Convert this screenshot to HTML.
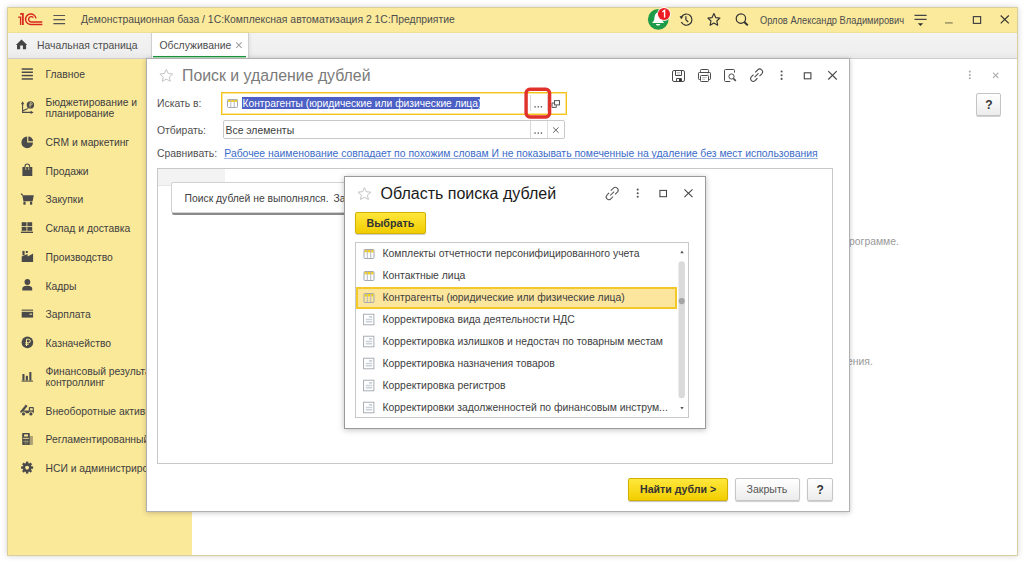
<!DOCTYPE html>
<html><head><meta charset="utf-8">
<style>
*{box-sizing:border-box;margin:0;padding:0}
html,body{width:1024px;height:563px;overflow:hidden;background:#fff;font-family:"Liberation Sans",sans-serif;font-size:10.4px;color:#4a4a4a}
.a{position:absolute}
.t{position:absolute;white-space:nowrap;line-height:12px}
#win{position:absolute;left:7px;top:7px;width:1011px;height:549px;border:1px solid #d8cf9c;box-shadow:0 0 6px rgba(0,0,0,.18);background:#fff;overflow:hidden}
svg{position:absolute;overflow:visible}
</style></head><body>
<div id="win"></div>

<!-- HEADER -->
<div class="a" style="left:8px;top:8px;width:1009px;height:25px;background:#fbea9c;border-bottom:1px solid #efdf95"></div>
<div class="t" style="left:81px;top:13.7px;color:#4d4d4d">Демонстрационная база / 1С:Комплексная автоматизация 2 1С:Предприятие</div>
<div class="t" style="left:759.5px;top:14.5px;color:#4d4d4d;transform:scaleX(.897);transform-origin:0 0">Орлов Александр Владимирович</div>

<!-- HEADER ICONS -->
<svg class="a" style="left:0;top:0" width="1024" height="40">
 <g fill="none" stroke="#d8261c" stroke-width="1.4">
  <path d="M18.2 17.1H20.6V25"/>
  <path d="M20.2 13.9H22.9V25" stroke-width="1.7"/>
  <path d="M36 18.4A5.25 5.25 0 1 0 31.2 24.5H42.3"/>
  <path d="M33.4 17.6A2.7 2.7 0 1 0 31.2 22H42.3"/>
 </g>
 <g stroke="#555" stroke-width="1.2">
  <path d="M53.4 15.5H65.1M53.4 19.6H65.1M53.4 23.6H65.1"/>
 </g>
 <circle cx="658.25" cy="19.4" r="10.35" fill="#1e9b48"/>
 <path d="M658 12.5C655 13 654.6 16 654.4 18.5C654.2 20.5 653.5 21.6 651.9 22.9H664.3C662.8 21.6 662 20.5 661.8 18.5C661.6 16 661 13 658 12.5Z" fill="#fff"/>
 <path d="M655.8 24H660.4C660 25.2 659.2 25.6 658.1 25.6C657 25.6 656.2 25.2 655.8 24Z" fill="#fff"/>
 <circle cx="664" cy="14" r="6.9" fill="#fff" opacity=".9"/>
 <circle cx="664" cy="14" r="6.1" fill="#ee1c24"/>
 <path d="M662.4 11.8L664.6 10.4V17.6" fill="none" stroke="#fff" stroke-width="1.4"/>
 <g fill="none" stroke="#333" stroke-width="1.2">
  <path d="M681.6 16.6A5.6 5.6 0 1 1 681.3 22.1"/>
  <path d="M685.9 16.2V19.8L688.2 22"/>
  <path d="M707.9 18.1L712.1 17.6L713.9 13.6L715.7 17.6L719.9 18.1L716.8 21L717.7 25.2L713.9 23.1L710.1 25.2L711 21Z" stroke-linejoin="round" stroke-width="1.15"/>
  <circle cx="740.9" cy="18.6" r="4.7"/>
  <path d="M744.3 22L747.8 25.4" stroke-width="2"/>
  <path d="M914.5 15.3H926.6M914.5 19.3H926.6" stroke="#444"/>
  <path d="M945 22.9H952.7" stroke="#8a8560" stroke-width="1.3"/>
  <rect x="973.4" y="16.6" width="7.2" height="6.8" stroke="#444"/>
  <path d="M1000.7 15.5L1008.8 23.4M1008.8 15.5L1000.7 23.4" stroke="#333" stroke-width="1.15"/>
 </g>
 <path d="M679.6 16.1L683.4 16.6L681.1 19.3Z" fill="#333"/>
 <path d="M917.8 23.2H923.2L920.5 26Z" fill="#333"/>
</svg>

<!-- TAB BAR -->
<div class="a" style="left:8px;top:33px;width:1009px;height:26px;background:linear-gradient(#f3f3f3,#efefef 75%,#e8e8e8);border-bottom:1px solid #cdcdcd"></div>
<div class="t" style="left:37px;top:40px;color:#4d4d4d">Начальная страница</div>
<div class="a" style="left:151px;top:33px;width:98px;height:25px;background:#fff;border-left:1px solid #cfcfcf;border-right:1px solid #cfcfcf;box-shadow:1px 0 3px rgba(0,0,0,.08)"></div>
<div class="a" style="left:153px;top:56px;width:93px;height:1px;background:#1a9a3c"></div><div class="a" style="left:153px;top:57px;width:93px;height:1px;background:#1a9a3c;opacity:.35"></div>
<div class="t" style="left:159.5px;top:40px;color:#4d4d4d">Обслуживание</div>

<svg class="a" style="left:0;top:0" width="260" height="60">
 <path d="M21.5 39.6L15.9 45.1H17V49.3H20.2V45.6H22.9V49.3H26.1V45.1H27.2Z" fill="#444"/>
 <path d="M236.2 42.3L241.6 47.8M241.6 42.3L236.2 47.8" stroke="#a5a5a5" stroke-width="1.2" fill="none"/>
</svg>

<!-- SIDEBAR -->
<div class="a" style="left:8px;top:59px;width:184px;height:496px;background:#fbe99a"></div>

<div class="t" style="left:45.5px;top:69px;color:#404040;font-size:10.33px">Главное</div>
<div class="t" style="left:45.5px;top:97px;color:#404040;font-size:10.33px">Бюджетирование и</div>
<div class="t" style="left:45.5px;top:108px;color:#404040;font-size:10.33px">планирование</div>
<div class="t" style="left:45.5px;top:137px;color:#404040;font-size:10.33px">CRM и маркетинг</div>
<div class="t" style="left:45.5px;top:165.5px;color:#404040;font-size:10.33px">Продажи</div>
<div class="t" style="left:45.5px;top:194px;color:#404040;font-size:10.33px">Закупки</div>
<div class="t" style="left:45.5px;top:223px;color:#404040;font-size:10.33px">Склад и доставка</div>
<div class="t" style="left:45.5px;top:251.5px;color:#404040;font-size:10.33px">Производство</div>
<div class="t" style="left:45.5px;top:280.5px;color:#404040;font-size:10.33px">Кадры</div>
<div class="t" style="left:45.5px;top:309px;color:#404040;font-size:10.33px">Зарплата</div>
<div class="t" style="left:45.5px;top:337.5px;color:#404040;font-size:10.33px">Казначейство</div>
<div class="t" style="left:45.5px;top:366px;color:#404040;font-size:10.33px">Финансовый результат и</div>
<div class="t" style="left:45.5px;top:377px;color:#404040;font-size:10.33px">контроллинг</div>
<div class="t" style="left:45.5px;top:405.5px;color:#404040;font-size:10.33px">Внеоборотные активы</div>
<div class="t" style="left:45.5px;top:434px;color:#404040;font-size:10.33px">Регламентированный учет</div>
<div class="t" style="left:45.5px;top:463px;color:#404040;font-size:10.33px">НСИ и администрирование</div>
<svg class="a" style="left:0;top:0" width="200" height="560">
 <g fill="#4a4a4a" stroke="none">
  <rect x="21.7" y="68.3" width="11.2" height="1.5"/><rect x="21.7" y="71.5" width="11.2" height="1.5"/><rect x="21.7" y="74.8" width="11.2" height="1.5"/><rect x="21.7" y="78.2" width="11.2" height="1.5"/>
 </g>
 <g fill="none" stroke="#4a4a4a" stroke-width="1.1">
  <path d="M22.6 102.5V112.4H32"/>
  <path d="M23 110.8L27.8 108.6"/>
 </g>
 <g fill="#4a4a4a">
  <path d="M20.9 104.2L22.6 101.2L24.3 104.2Z"/>
  <path d="M30.6 110.7L33.6 112.4L30.6 114.1Z"/>
  <circle cx="30.4" cy="104.9" r="3.7"/>
 </g>
 <path d="M30 107.6V102.7H31.1A1.15 1.15 0 0 1 31.1 105H29.2" fill="none" stroke="#fbe99a" stroke-width=".65"/>
 <path d="M27.2 142.4V136.6A5.8 5.8 0 1 0 33 142.4Z" fill="#4a4a4a"/>
 <path d="M28.3 136.5V141.3H33.1A4.8 4.8 0 0 0 28.3 136.5Z" fill="#4a4a4a"/>
 <path d="M22.4 167H32.3V176H22.4Z" fill="#4a4a4a"/>
 <path d="M25 169V166.3A2.3 2.3 0 0 1 29.6 166.3V169" fill="none" stroke="#4a4a4a" stroke-width="1.1"/>
 <path d="M25.8 167.2V170M28.8 167.2V170" stroke="#fbe99a" stroke-width=".7"/>
 <path d="M21 193.6L22.7 195.2" stroke="#4a4a4a" stroke-width="1.3"/>
 <path d="M22.3 195.3H33.8L32.6 201.2H23.4Z" fill="#4a4a4a"/>
 <rect x="23.4" y="201.6" width="2.2" height="3.1" fill="#4a4a4a"/><rect x="30" y="201.6" width="2.2" height="3.1" fill="#4a4a4a"/>
 <g fill="#4a4a4a">
  <rect x="21.7" y="222.2" width="4.8" height="3.9"/><rect x="27.3" y="222.2" width="4.9" height="3.9"/>
  <rect x="21.7" y="226.9" width="4.8" height="3.9"/><rect x="27.3" y="226.9" width="4.9" height="3.9"/>
  <rect x="20.9" y="231.6" width="12.1" height="1.4"/>
  <path d="M21.7 262V256.6L27.6 253.9V256.6L33.1 253.5V262Z"/>
  <rect x="22.4" y="250.9" width="2.2" height="4.4"/><rect x="25.8" y="251" width="2" height="2"/>
  <circle cx="27.4" cy="282" r="2.9"/>
  <path d="M22.3 290.5V288.6C22.3 286.6 25 285.8 27.3 285.8C29.6 285.8 32.2 286.6 32.2 288.6V290.5Z"/>
  <rect x="21.7" y="309.6" width="11.4" height="1.1"/>
  <rect x="21.7" y="311.8" width="11.4" height="5.8"/>
  <circle cx="27.4" cy="342.4" r="5.8"/>
  <rect x="22.4" y="374" width="2.1" height="6.6"/><rect x="25.8" y="375.8" width="2.1" height="4.8"/><rect x="29.3" y="372" width="2.1" height="8.6"/>
  <rect x="21.5" y="380.6" width="11.5" height="1"/>
  <path d="M20.4 411.6L25.6 404.6L27.6 406L23.2 411.6Z"/>
  <rect x="20.5" y="410.6" width="13.3" height="2.6" rx=".6"/>
  <path d="M28.8 410.8V407.9A.8 .8 0 0 1 29.6 407.1H33A.8 .8 0 0 1 33.8 407.9V411Z"/>
  <rect x="22.2" y="433" width="7.6" height="12" rx="0.7"/>
  <rect x="29.8" y="436" width="3.1" height="9" opacity=".45"/>
 </g>
 <rect x="29.5" y="313.6" width="2.6" height="1.1" fill="#fbe99a"/>
 <path d="M26.5 346V339.2H28.5A1.8 1.8 0 0 1 28.5 342.8H25.3M25.3 344.3H28.6" fill="none" stroke="#fbe99a" stroke-width="1"/>
 <rect x="30.1" y="408.2" width="2.6" height="2.2" fill="#fbe99a"/>
 <path d="M22.4 406.8L24.6 403.8M23.6 407.8L25.8 404.8" stroke="#fbe99a" stroke-width=".35" opacity=".6"/>
 <circle cx="23.5" cy="413.9" r="2.4" fill="#fbe99a"/><circle cx="30.9" cy="413.9" r="2.4" fill="#fbe99a"/>
 <circle cx="23.5" cy="413.9" r="1.6" fill="#4a4a4a"/><circle cx="30.9" cy="413.9" r="1.6" fill="#4a4a4a"/>
 <rect x="24.1" y="434.4" width="3.9" height="2.1" fill="#fbe99a"/>
 <rect x="23.1" y="437.8" width="5.8" height="1.1" fill="#fbe99a" opacity=".85"/>
 <path d="M23 441.6H29M25.2 439.5V444.6M27.1 439.5V444.6" stroke="#fbe99a" stroke-width=".5" opacity=".7"/>
 <g transform="translate(27.1 467.6)">
  <circle r="3.2" fill="none" stroke="#4a4a4a" stroke-width="2.6"/>
  <g fill="#4a4a4a">
   <rect x="-1.2" y="-6" width="2.4" height="2.6"/><rect x="-1.2" y="3.4" width="2.4" height="2.6"/>
   <rect x="-6" y="-1.2" width="2.6" height="2.4"/><rect x="3.4" y="-1.2" width="2.6" height="2.4"/>
   <g transform="rotate(45)"><rect x="-1.2" y="-6" width="2.4" height="2.6"/><rect x="-1.2" y="3.4" width="2.4" height="2.6"/>
   <rect x="-6" y="-1.2" width="2.6" height="2.4"/><rect x="3.4" y="-1.2" width="2.6" height="2.4"/></g>
  </g>
 </g>
</svg>

<!-- FORM -->
<svg class="a" style="left:0;top:0" width="1024" height="130">
 <g fill="#aaa"><circle cx="969.8" cy="71.6" r="1.05"/><circle cx="969.8" cy="75" r="1.05"/><circle cx="969.8" cy="78.3" r="1.05"/></g>
 <path d="M993 72.7L998.3 78M998.3 72.7L993 78" stroke="#b0b0b0" stroke-width="1.1" fill="none"/>
</svg>
<div class="a" style="left:976px;top:93px;width:25px;height:23px;border:1px solid #c4c4c4;border-radius:2px;background:linear-gradient(#fff,#ececec);box-shadow:0 1px 0 #d0d0d0"></div>
<div class="t" style="left:985.2px;top:98.5px;font-weight:bold;color:#333;font-size:12px">?</div>
<div class="t" style="left:835px;top:236px;color:#9a9a9a">в программе.</div>
<div class="t" style="left:847px;top:355.5px;color:#9a9a9a">ения.</div>


<!-- DIALOG 1 -->
<div class="a" style="left:146px;top:58px;width:704px;height:454px;background:#fff;border:1px solid #b0b0b0;box-shadow:0 1px 5px rgba(0,0,0,.22)"></div>
<div class="t" style="left:182px;top:70px;font-size:15.85px;line-height:12px;color:#7a7a7a">Поиск и удаление дублей</div>

<svg class="a" style="left:0;top:0" width="1024" height="200">
 <path d="M166.3 69.4L168.2 73.5L172.7 74L169.3 77L170.3 81.3L166.3 79.1L162.3 81.3L163.3 77L159.9 74L164.4 73.5Z" fill="none" stroke="#c4c4c4" stroke-width="1" stroke-linejoin="round"/>
 <g fill="none" stroke="#4a4a4a" stroke-width="1.1">
  <rect x="672.5" y="70.5" width="12" height="11" rx="1.5" stroke-width="1"/>
  <path d="M675.5 70.5V75.5H681.5V70.5" stroke-width="1"/>
  <path d="M676.8 72.5H680.2M676.8 74H680.2" stroke="#b0b0b0" stroke-width=".8"/>
  <path d="M676.5 81.5V78.5H681.5V81.5" stroke-width="1"/>
  <rect x="679" y="79" width="2" height="2.5" fill="#333" stroke="none"/>
  <rect x="700.5" y="69.5" width="8" height="3" rx=".8" stroke-width="1"/>
  <path d="M700 79.5H699.3A.8 .8 0 0 1 698.5 78.7V73.3A.8 .8 0 0 1 699.3 72.5H709.7A.8 .8 0 0 1 710.5 73.3V78.7A.8 .8 0 0 1 709.7 79.5H709" stroke-width="1"/>
  <rect x="700.5" y="75.5" width="8" height="6" rx=".8" fill="#fff" stroke-width="1"/>
  <path d="M702.2 77.6H706.8M702.2 79.3H705" stroke="#b0b0b0" stroke-width=".8"/>
  <path d="M707.2 74H708.8" stroke="#aaa" stroke-width=".8"/>
  <path d="M730.3 81.5H725.5A1 1 0 0 1 724.5 80.5V70.5A1 1 0 0 1 725.5 69.5H733.5A1 1 0 0 1 734.5 70.5V72.6" stroke-width="1"/>
  <circle cx="731.5" cy="76.5" r="2.6" stroke-width="1"/>
  <path d="M733.4 78.5L735.8 80.9" stroke-width="1.7"/>
  <path d="M755.2 72.4L757.6 70A2.5 2.5 0 0 1 761.8 73.8L759.5 76.1"/>
  <path d="M753.5 74.6L751.3 76.9A2.5 2.5 0 0 0 755.2 80.5L757.5 78.2"/>
  <path d="M754.6 77.2L758.5 73.3"/>
  <rect x="804.3" y="72.8" width="6.6" height="6" stroke="#444"/>
  <path d="M828.3 71.1L836.7 79.5M836.7 71.1L828.3 79.5" stroke="#444"/>
 </g>
 <g fill="#555"><circle cx="781.6" cy="71.5" r="1.05"/><circle cx="781.6" cy="75.2" r="1.05"/><circle cx="781.6" cy="78.9" r="1.05"/></g>
</svg>
<div class="t" style="left:157px;top:98px;color:#505050">Искать в:</div>
<div class="t" style="left:157px;top:124.5px;color:#505050">Отбирать:</div>
<div class="t" style="left:157px;top:148px;color:#505050">Сравнивать:</div>
<div class="a" style="left:221px;top:92px;width:346px;height:23px;border:1px solid #f4c41c;box-shadow:inset 0 0 0 1px rgba(246,204,50,.5)"></div>
<div class="a" style="left:242px;top:97px;width:238px;height:12px;background:#4b5fc4"></div>
<div class="t" style="left:242.5px;top:98px;color:#fff;font-size:10.25px">Контрагенты (юридические или физические лица)</div>
<div class="a" style="left:529.5px;top:95px;width:1.5px;height:16px;background:#d9d9d9"></div>
<div class="a" style="left:547px;top:95px;width:1px;height:16px;background:#dedede"></div>
<div class="a" style="left:223px;top:120px;width:342px;height:19px;border:1px solid #c9c9c9;border-radius:2px"></div>
<div class="a" style="left:529.5px;top:121px;width:1.5px;height:17px;background:#d9d9d9"></div>
<div class="a" style="left:547px;top:121px;width:1px;height:17px;background:#dedede"></div>
<div class="t" style="left:225.5px;top:124.5px;color:#404040">Все элементы</div>
<svg class="a" style="left:0;top:0" width="1024" height="200">
 <g fill="#444"><rect x="534.4" y="106.2" width="1.3" height="1.3"/><rect x="537.6" y="106.2" width="1.3" height="1.3"/><rect x="540.8" y="106.2" width="1.3" height="1.3"/>
 <rect x="534.4" y="132.4" width="1.3" height="1.3"/><rect x="537.6" y="132.4" width="1.3" height="1.3"/><rect x="540.8" y="132.4" width="1.3" height="1.3"/></g>
 <path d="M553.1 127.4L558.5 132.7M558.5 127.4L553.1 132.7" stroke="#666" stroke-width="1" fill="none"/>
 <g fill="none" stroke="#555" stroke-width="1">
  <path d="M554.2 103H552V107.4H556.3V105.3"/>
  <rect x="554.5" y="100.6" width="5" height="4.3" fill="#fff"/>
 </g>
 <rect x="228" y="99.5" width="9.5" height="2.4" fill="#f4cf1e"/>
 <g fill="none" stroke="#a3a9af" stroke-width="1"><rect x="227.5" y="99.5" width="10" height="8" rx="1"/><path d="M230.8 99.5V107.5M234.2 99.5V107.5" stroke="#b4babf"/></g>
 <rect x="526.1" y="89.3" width="23.5" height="27.7" rx="3.8" fill="none" stroke="#e0312b" stroke-width="3.4"/>
</svg>
<div class="t" style="left:224.3px;top:148px;color:#3a6bc9">Рабочее наименование совпадает по похожим словам И не показывать помеченные на удаление без мест использования</div>
<div class="a" style="left:224px;top:158.2px;width:594px;height:1px;background:#9bb2e0"></div>
<div class="a" style="left:157px;top:168px;width:676px;height:296px;border:1px solid #c8c8c8"></div>
<div class="a" style="left:158px;top:169px;width:67px;height:17px;background:#f3f3f3;border-bottom:1px solid #e6e6e6"></div>
<div class="a" style="left:171px;top:182px;width:300px;height:31px;border:1px solid #d2d2d2;border-radius:2px;background:#fff;box-shadow:1px 2px 0 #8a8a8a"></div>
<div class="t" style="left:184.6px;top:193.3px;color:#404040;font-size:10.33px">Поиск дублей не выполнялся. <span style="margin-left:2px">Запустите поиск</span></div>
<div class="a" style="left:628px;top:478px;width:100px;height:23px;border:1px solid #d1b000;border-radius:2px;background:linear-gradient(#ffe83c,#f2cd00);box-shadow:0 1px 1px rgba(0,0,0,.25)"></div>
<div class="t" style="left:640px;top:483px;font-weight:bold;color:#333;font-size:10.6px">Найти дубли &gt;</div>
<div class="a" style="left:735px;top:478px;width:65px;height:23px;border:1px solid #c6c6c6;border-radius:2px;background:linear-gradient(#fff,#ececec);box-shadow:0 1px 1px rgba(0,0,0,.2)"></div>
<div class="t" style="left:746.5px;top:483px;color:#555;font-size:10.6px">Закрыть</div>
<div class="a" style="left:807px;top:478px;width:26px;height:23px;border:1px solid #c6c6c6;border-radius:2px;background:linear-gradient(#fff,#ececec);box-shadow:0 1px 1px rgba(0,0,0,.2)"></div>
<div class="t" style="left:816.6px;top:483.5px;font-weight:bold;color:#333;font-size:12px">?</div>

<!-- DIALOG 2 -->
<div class="a" style="left:344px;top:176px;width:362px;height:253px;background:#fff;border:1px solid #9a9a9a;box-shadow:0 1px 6px rgba(0,0,0,.25)"></div>
<svg class="a" style="left:0;top:0" width="1024" height="440">
 <path d="M364.4 187.6L366.3 191.7L370.8 192.2L367.4 195.2L368.4 199.5L364.4 197.3L360.4 199.5L361.4 195.2L358 192.2L362.5 191.7Z" fill="none" stroke="#c4c4c4" stroke-width="1" stroke-linejoin="round"/>
 <g fill="none" stroke="#555" stroke-width="1.05">
  <path d="M610.8 190.7L613.2 188.3A2.5 2.5 0 0 1 617.4 192.1L615.1 194.4"/>
  <path d="M609.1 192.9L606.9 195.2A2.5 2.5 0 0 0 610.8 198.8L613.1 196.5"/>
  <path d="M610.2 195.5L614.1 191.6"/>
  <rect x="659.9" y="190.4" width="6.6" height="6.3" stroke="#444"/>
  <path d="M684.4 189.3L692.5 197.2M692.5 189.3L684.4 197.2" stroke="#444"/>
 </g>
 <g fill="#555"><circle cx="637.7" cy="189.6" r="1.05"/><circle cx="637.7" cy="193.2" r="1.05"/><circle cx="637.7" cy="196.8" r="1.05"/></g>
</svg>
<div class="t" style="left:380.5px;top:188px;font-size:16px;color:#1a1a1a">Область поиска дублей</div>
<div class="a" style="left:355px;top:212px;width:71px;height:22px;border:1px solid #d2b200;border-radius:2px;background:linear-gradient(#ffe63c,#f1cd00);box-shadow:0 1px 1px rgba(0,0,0,.2)"></div>
<div class="t" style="left:366.5px;top:216.5px;font-weight:bold;color:#333;font-size:10.7px">Выбрать</div>
<div class="a" style="left:355px;top:242px;width:334px;height:176px;border:1px solid #c8c8c8"></div>
<div class="a" style="left:356px;top:286.5px;width:321px;height:22px;border:2px solid #f5c82a;background:#fce59d"></div>
<div class="t" style="left:382.5px;top:248px;color:#404040">Комплекты отчетности персонифицированного учета</div>
<div class="t" style="left:382.5px;top:270px;color:#404040">Контактные лица</div>
<div class="t" style="left:382.5px;top:292px;color:#404040">Контрагенты (юридические или физические лица)</div>
<div class="t" style="left:382.5px;top:314px;color:#404040">Корректировка вида деятельности НДС</div>
<div class="t" style="left:382.5px;top:336px;color:#404040">Корректировка излишков и недостач по товарным местам</div>
<div class="t" style="left:382.5px;top:358px;color:#404040">Корректировка назначения товаров</div>
<div class="t" style="left:382.5px;top:380px;color:#404040">Корректировка регистров</div>
<div class="t" style="left:382.5px;top:402px;color:#404040">Корректировки задолженностей по финансовым инструм...</div>
<svg class="a" style="left:0;top:0" width="1024" height="440">
 <rect x="364.5" y="250.0" width="9" height="2.4" fill="#f4cf1e"/><g fill="none" stroke="#a3a9af" stroke-width="1"><rect x="364" y="249.5" width="10" height="9" rx="1"/><path d="M367.3 249.5V258.5M370.7 249.5V258.5" stroke="#b4babf"/></g>
 <rect x="364.5" y="272.0" width="9" height="2.4" fill="#f4cf1e"/><g fill="none" stroke="#a3a9af" stroke-width="1"><rect x="364" y="271.5" width="10" height="9" rx="1"/><path d="M367.3 271.5V280.5M370.7 271.5V280.5" stroke="#b4babf"/></g>
 <rect x="364.5" y="294.0" width="9" height="2.4" fill="#f4cf1e"/><g fill="none" stroke="#a3a9af" stroke-width="1"><rect x="364" y="293.5" width="10" height="9" rx="1"/><path d="M367.3 293.5V302.5M370.7 293.5V302.5" stroke="#b4babf"/></g>
 <rect x="363.6" y="314.2" width="10.3" height="10.6" fill="#fff" stroke="#9ea4aa" stroke-width=".9"/><path d="M369 316.9H372.2M365.7 319.5H372.2M365.7 321.8H372.2" stroke="#c9d1da" stroke-width="1.6"/>
 <rect x="363.6" y="336.2" width="10.3" height="10.6" fill="#fff" stroke="#9ea4aa" stroke-width=".9"/><path d="M369 338.9H372.2M365.7 341.5H372.2M365.7 343.8H372.2" stroke="#c9d1da" stroke-width="1.6"/>
 <rect x="363.6" y="358.2" width="10.3" height="10.6" fill="#fff" stroke="#9ea4aa" stroke-width=".9"/><path d="M369 360.9H372.2M365.7 363.5H372.2M365.7 365.8H372.2" stroke="#c9d1da" stroke-width="1.6"/>
 <rect x="363.6" y="380.2" width="10.3" height="10.6" fill="#fff" stroke="#9ea4aa" stroke-width=".9"/><path d="M369 382.9H372.2M365.7 385.5H372.2M365.7 387.8H372.2" stroke="#c9d1da" stroke-width="1.6"/>
 <rect x="363.6" y="402.2" width="10.3" height="10.6" fill="#fff" stroke="#9ea4aa" stroke-width=".9"/><path d="M369 404.9H372.2M365.7 407.5H372.2M365.7 409.8H372.2" stroke="#c9d1da" stroke-width="1.6"/>
 <path d="M680.3 253.3H683.7L682 250.6Z" fill="#555"/>
 <path d="M680.3 406.9H683.7L682 409.6Z" fill="#555"/>
 <rect x="678.5" y="261.3" width="6.4" height="137" rx="3.2" fill="#dadada"/>
 <circle cx="681.7" cy="301.1" r="3.1" fill="#a5a5a5"/>
</svg>


</body></html>
